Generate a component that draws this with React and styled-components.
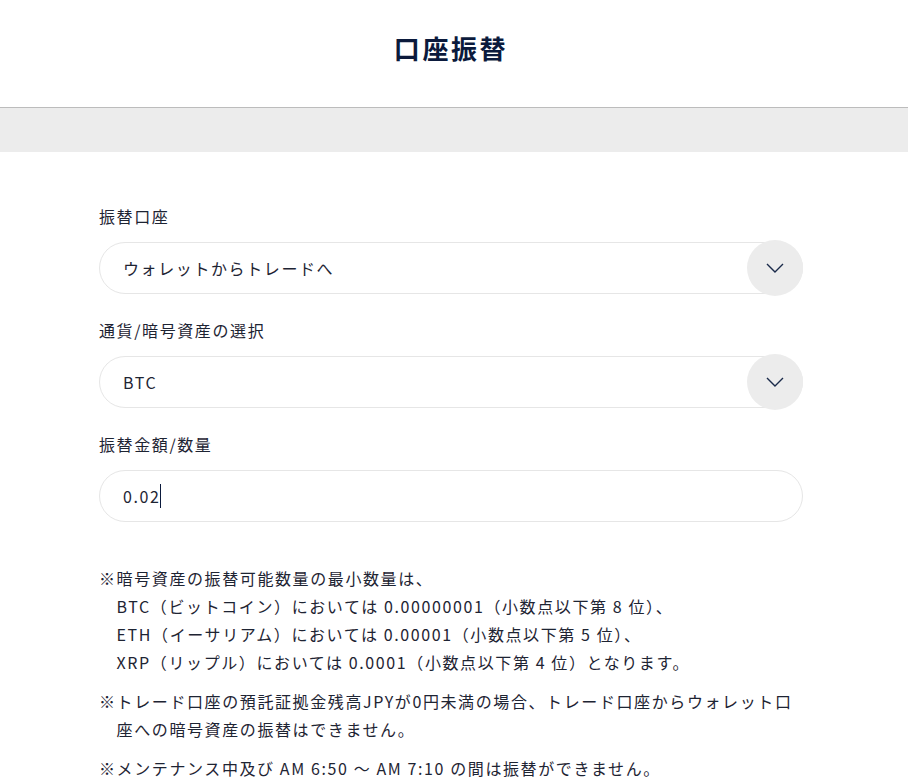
import styled, { createGlobalStyle } from "styled-components"

const GlobalStyle = createGlobalStyle`
  body {
    margin: 0;
    background: #fff;
    font-family: "Noto Sans CJK JP", "Noto Sans", sans-serif;
    color: #1e2433;
  }
`

const Header = styled.header`
  height: 107px;
  box-sizing: content-box;
  border-bottom: 1px solid #bcbcbc;
  display: flex;
  align-items: center;
`

const Inner = styled.div`
  width: 704px;
  margin-left: 99px;
`

const Title = styled.h1`
  margin: 0 0 13px;
  text-align: center;
  font-size: 26px;
  font-weight: 700;
  letter-spacing: 0.1em;
  color: #0b1a3c;
`

const Band = styled.div`
  height: 44px;
  background: #ececec;
`

const Form = styled.div`
  padding-top: 52px;
`

const Group = styled.div`
  margin-bottom: 24px;
`

const Label = styled.div`
  font-size: 16px;
  line-height: 24px;
  letter-spacing: 0.1em;
  margin-bottom: 14px;
`

const Field = styled.div`
  position: relative;
  height: 52px;
  box-sizing: border-box;
  border: 1px solid #e6e6e6;
  border-radius: 26px;
  display: flex;
  align-items: center;
  padding-left: 23px;
  font-size: 16px;
  letter-spacing: 0.1em;
`

const Toggle = styled.span`
  position: absolute;
  right: -1px;
  top: -3px;
  width: 56px;
  height: 56px;
  border-radius: 50%;
  background: #ececec;
  display: flex;
  align-items: center;
  justify-content: center;
`

const Caret = styled.span`
  display: inline-block;
  width: 1px;
  height: 24px;
  background: #0b1a3c;
  margin-left: -1px;
`

const Notes = styled.div`
  margin-top: 42px;
`

const Note = styled.p`
  margin: 0 0 11px;
  font-size: 16px;
  line-height: 28px;
  letter-spacing: 0.1em;
  padding-left: 1.1em;
  text-indent: -1.1em;
`

const Chevron = () => (
  <svg width="18" height="10" viewBox="0 0 18 10">
    <path d="M1 1 L9 9 L17 1" fill="none" stroke="#1a2a4a" strokeWidth="1.4" />
  </svg>
)

const Select = ({ value }) => (
  <Field>
    {value}
    <Toggle>
      <Chevron />
    </Toggle>
  </Field>
)

export default function App() {
  return (
    <>
      <GlobalStyle />
      <Header>
        <Inner>
          <Title>口座振替</Title>
        </Inner>
      </Header>
      <Band />
      <Inner>
        <Form>
          <Group>
            <Label>振替口座</Label>
            <Select value="ウォレットからトレードへ" />
          </Group>
          <Group>
            <Label>通貨/暗号資産の選択</Label>
            <Select value="BTC" />
          </Group>
          <Group>
            <Label>振替金額/数量</Label>
            <Field>
              0.02<Caret />
            </Field>
          </Group>
        </Form>
        <Notes>
          <Note>
            ※暗号資産の振替可能数量の最小数量は、<br />
            BTC（ビットコイン）においては 0.00000001（小数点以下第 8 位）、<br />
            ETH（イーサリアム）においては 0.00001（小数点以下第 5 位）、<br />
            XRP（リップル）においては 0.0001（小数点以下第 4 位）となります。
          </Note>
          <Note>
            ※トレード口座の預託証拠金残高JPYが0円未満の場合、トレード口座からウォレット口<br />
            座への暗号資産の振替はできません。
          </Note>
          <Note>※メンテナンス中及び AM 6:50 ～ AM 7:10 の間は振替ができません。</Note>
        </Notes>
      </Inner>
    </>
  )
}
